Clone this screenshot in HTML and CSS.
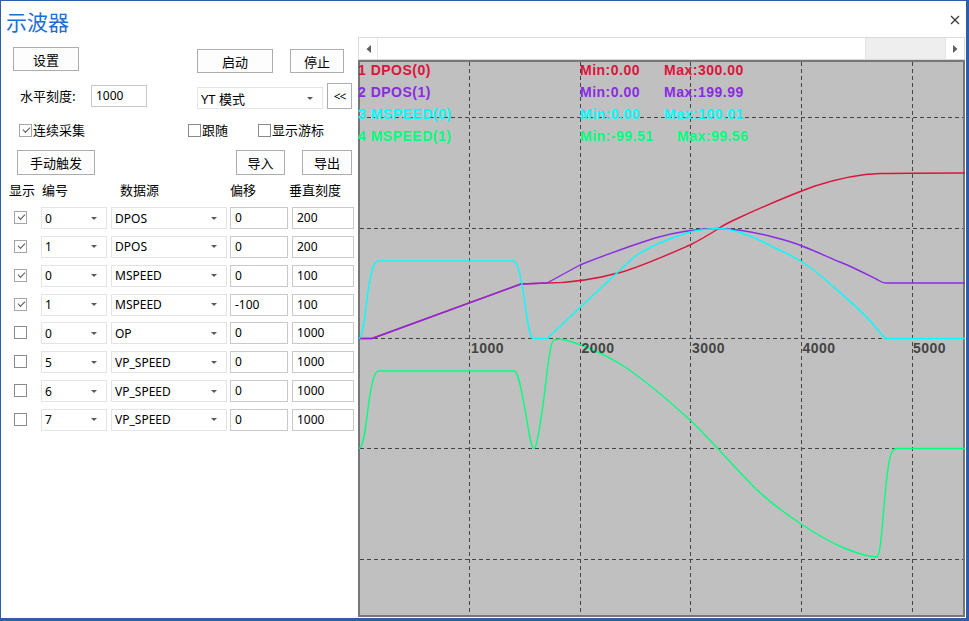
FILE: index.html
```html
<!DOCTYPE html>
<html lang="zh-CN">
<head>
<meta charset="utf-8">
<title>示波器</title>
<link rel="stylesheet" href="styles.css">
</head>
<body>
<div class="window">
  <header class="titlebar">
    <h1 class="title">示波器</h1>
    <span class="close"><svg width="10" height="10" viewBox="0 0 10 10"><path d="M1 1L9 9M9 1L1 9" stroke="#3a3a3a" stroke-width="1.3" fill="none"/></svg></span>
  </header>
  <div class="main">
    <section class="left">
      <div class="row row-a">
        <span class="btn btn-set">设置</span>
        <span class="btn btn-start">启动</span>
        <span class="btn btn-stop">停止</span>
      </div>
      <div class="row row-b">
        <span class="label">水平刻度:</span>
        <span class="field in-hscale">1000</span>
        <span class="combo sel-mode"><span class="ctext">YT 模式</span><span class="caret"></span></span>
        <span class="btn btn-collapse">&lt;&lt;</span>
      </div>
      <div class="row row-c">
        <span class="chk chk-cont"><span class="cb on"></span>连续采集</span>
        <span class="chk chk-follow"><span class="cb"></span>跟随</span>
        <span class="chk chk-cursor"><span class="cb"></span>显示游标</span>
      </div>
      <div class="row row-d">
        <span class="btn btn-trig">手动触发</span>
        <span class="btn btn-imp">导入</span>
        <span class="btn btn-exp">导出</span>
      </div>
      <div class="row thead">
        <span class="th th-show">显示</span>
        <span class="th th-no">编号</span>
        <span class="th th-src">数据源</span>
        <span class="th th-off">偏移</span>
        <span class="th th-scale">垂直刻度</span>
      </div>
      <div class="table">
        <div class="trow"><span class="cb on"></span><span class="combo c-no"><span class="ctext">0</span><span class="caret"></span></span><span class="combo c-src"><span class="ctext">DPOS</span><span class="caret"></span></span><span class="field f-off">0</span><span class="field f-scale">200</span></div>
        <div class="trow"><span class="cb on"></span><span class="combo c-no"><span class="ctext">1</span><span class="caret"></span></span><span class="combo c-src"><span class="ctext">DPOS</span><span class="caret"></span></span><span class="field f-off">0</span><span class="field f-scale">200</span></div>
        <div class="trow"><span class="cb on"></span><span class="combo c-no"><span class="ctext">0</span><span class="caret"></span></span><span class="combo c-src"><span class="ctext">MSPEED</span><span class="caret"></span></span><span class="field f-off">0</span><span class="field f-scale">100</span></div>
        <div class="trow"><span class="cb on"></span><span class="combo c-no"><span class="ctext">1</span><span class="caret"></span></span><span class="combo c-src"><span class="ctext">MSPEED</span><span class="caret"></span></span><span class="field f-off">-100</span><span class="field f-scale">100</span></div>
        <div class="trow"><span class="cb"></span><span class="combo c-no"><span class="ctext">0</span><span class="caret"></span></span><span class="combo c-src"><span class="ctext">OP</span><span class="caret"></span></span><span class="field f-off">0</span><span class="field f-scale">1000</span></div>
        <div class="trow"><span class="cb"></span><span class="combo c-no"><span class="ctext">5</span><span class="caret"></span></span><span class="combo c-src"><span class="ctext">VP_SPEED</span><span class="caret"></span></span><span class="field f-off">0</span><span class="field f-scale">1000</span></div>
        <div class="trow"><span class="cb"></span><span class="combo c-no"><span class="ctext">6</span><span class="caret"></span></span><span class="combo c-src"><span class="ctext">VP_SPEED</span><span class="caret"></span></span><span class="field f-off">0</span><span class="field f-scale">1000</span></div>
        <div class="trow"><span class="cb"></span><span class="combo c-no"><span class="ctext">7</span><span class="caret"></span></span><span class="combo c-src"><span class="ctext">VP_SPEED</span><span class="caret"></span></span><span class="field f-off">0</span><span class="field f-scale">1000</span></div>
      </div>
    </section>
    <section class="right">
      <div class="hscroll">
        <span class="sb-btn sb-left"><svg width="5" height="8" viewBox="0 0 5 8"><path d="M5 0V8L0.5 4Z" fill="#5f5f5f"/></svg></span>
        <span class="sb-thumb"></span>
        <span class="sb-track"></span>
        <span class="sb-btn sb-right"><svg width="5" height="8" viewBox="0 0 5 8"><path d="M0 0V8L4.5 4Z" fill="#5f5f5f"/></svg></span>
      </div>
      <svg class="plot" width="607" height="557" viewBox="358 60 607 557">
        <rect x="358" y="60" width="607" height="557" fill="#c0c0c0"/>
        <g stroke="#454545" stroke-width="1" stroke-dasharray="4 3" fill="none">
          <path d="M469.5 62V615M580.5 62V615M690.5 62V615M801.5 62V615M912.5 62V615"/>
          <path d="M360 117.5H963M360 228.5H963M360 338.5H963M360 448.5H963M360 559.5H963"/>
        </g>
        <rect x="359" y="61" width="605" height="555" fill="none" stroke="#767676" stroke-width="2"/>
        <g fill="none" stroke-width="1.4" stroke-linejoin="round">
          <path stroke="#dc143c" d="M359 338.5L372 338.5L521 284L547 283C575 283 600 278 622 272C645 265 665 256 690 245C700 240 710 234 718 229C722 226 726 224 732 221C760 208 790 195 815 186C840 178 860 174 880 173.5C900 173 930 173 965 173"/>
          <path stroke="#8a2be2" d="M359 338.5L372 338.5L521 284L547 283L580 265C600 257 630 246 655 238C672 233 695 229 718 228.5C740 229 758 233 773 237C785 240 795 243 802 246C815 251 828 257 840 262C855 268 868 275 878 280C881 282 883 283 886 283L965 283"/>
          <path stroke="#00ffff" d="M359 338.5C364 338.5 366 300 369 285C372 268 374 261 379 261L513 261C518 261 520 275 523 290C526 310 529 338.5 533 338.5L547 338.5L634 257C650 246 670 238 690 232C700 229.5 710 228.5 722 228.5C740 230 760 240 773 247C785 253 795 257 802 262C812 268 820 275 828 282C845 297 860 309 872 323L885 338.5L965 338.5"/>
          <path stroke="#00ff7f" d="M359 448.5C365 448.5 367 410 370 395C373 378 375 371 379 371L514 371C519 371 522 395 526 415C529 432 531 448.5 534 448.5C537 448.5 540 425 543 405C546 385 549 345 553 341C555 339 557 339 560 339C580 343 600 352 622 365C645 380 668 400 690 420C712 441 733 466 753 486C770 503 786 514 801 524C816 534 830 542 844 548C856 553 866 556 876 557C879 557 880 550 882 530C884 505 886 480 889 462C891 452 893 448.5 897 448.5L965 448.5"/>
        </g>
        <g class="lg">
          <text x="358" y="75" fill="#dc143c">1 DPOS(0)</text>
          <text x="580" y="75" fill="#dc143c">Min:0.00</text>
          <text x="664" y="75" fill="#dc143c">Max:300.00</text>
          <text x="358" y="97" fill="#8a2be2">2 DPOS(1)</text>
          <text x="580" y="97" fill="#8a2be2">Min:0.00</text>
          <text x="664" y="97" fill="#8a2be2">Max:199.99</text>
          <text x="358" y="119" fill="#00ffff">3 MSPEED(0)</text>
          <text x="580" y="119" fill="#00ffff">Min:0.00</text>
          <text x="664" y="119" fill="#00ffff">Max:100.01</text>
          <text x="358" y="141" fill="#00ff7f">4 MSPEED(1)</text>
          <text x="580" y="141" fill="#00ff7f">Min:-99.51</text>
          <text x="677" y="141" fill="#00ff7f">Max:99.56</text>
        </g>
        <g class="lg axis" fill="#444">
          <text x="471" y="353">1000</text>
          <text x="581.5" y="353">2000</text>
          <text x="692" y="353">3000</text>
          <text x="802.5" y="353">4000</text>
          <text x="913" y="353">5000</text>
        </g>
      </svg>
    </section>
  </div>
</div>
</body>
</html>
```

FILE: styles.css
```css
* { box-sizing: border-box; }
html, body { margin: 0; padding: 0; background: #fff; }
body {
  font-family: "Noto Sans", "Noto Sans CJK SC", sans-serif;
  font-size: 13px;
  color: #000;
}
.window {
  width: 969px;
  height: 621px;
  border-style: solid;
  border-color: #2d5ea8;
  border-width: 1px 3px 3px 1px;
  background: #fff;
  overflow: hidden;
  display: flex;
  flex-direction: column;
}
.titlebar {
  height: 36px;
  flex: none;
  display: flex;
  align-items: center;
  justify-content: space-between;
  padding: 4px 6px 0 5px;
}
.title {
  margin: 0;
  font-family: "Noto Sans CJK SC", sans-serif;
  font-weight: normal;
  font-size: 21px;
  line-height: 28px;
  color: #1c6fd6;
}
.close { display: flex; width: 10px; height: 10px; margin-top: -2px; margin-right: 0; }
.main { flex: 1; display: flex; min-height: 0; }
.left { width: 357px; flex: none; }
.right { width: 607px; flex: none; display: flex; flex-direction: column; }

.row { display: flex; align-items: flex-start; }

.btn {
  display: flex;
  align-items: center;
  justify-content: center;
  font-family: "Noto Sans CJK SC", sans-serif;
  font-size: 13px;
  background: #fdfdfd;
  border: 1px solid #adadad;
  color: #000;
  flex: none;
}
.row-a { margin-top: 10px; height: 26px; }
.btn-set { margin-left: 12px; width: 66px; height: 24px; }
.btn-start { margin-left: 118px; margin-top: 2px; width: 76px; height: 24px; }
.btn-stop { margin-left: 17px; margin-top: 2px; width: 54px; height: 24px; }

.row-b { margin-top: 10px; height: 26px; }
.label { margin-left: 19px; width: 71px; line-height: 26px; font-family: "Noto Sans CJK SC", sans-serif; }
.field {
  display: block;
  height: 22px;
  border: 1px solid #c9c9c9;
  background: #fff;
  font-family: "Noto Sans", sans-serif;
  font-size: 12px;
  line-height: 20px;
  padding-left: 4px;
  flex: none;
}
.in-hscale { width: 56px; margin-top: 2px; }
.combo {
  display: flex;
  align-items: center;
  justify-content: space-between;
  height: 22px;
  border: 1px solid #e4e4e4;
  background: #fff;
  padding: 0 9px 0 3px;
  font-family: "Noto Sans", sans-serif;
  font-size: 12px;
  flex: none;
}
.caret {
  width: 0; height: 0;
  border-left: 3px solid transparent;
  border-right: 3px solid transparent;
  border-top: 3px solid #5a5a5a;
}
.sel-mode { margin-left: 50px; margin-top: 4px; width: 126px; font-size: 13px; }
.sel-mode .ctext { font-family: "Noto Sans", "Noto Sans CJK SC", sans-serif; }
.btn-collapse { margin-left: 4px; width: 25px; height: 26px; font-family: "Noto Sans", sans-serif; font-size: 12px; letter-spacing: -1px; }

.row-c { margin-top: 13px; height: 16px; align-items: center; }
.chk { display: flex; align-items: center; font-family: "Noto Sans CJK SC", sans-serif; line-height: 16px; }
.chk .cb { margin-right: 1px; }
.chk-cont { margin-left: 18px; }
.chk-follow { margin-left: 103px; }
.chk-cursor { margin-left: 30px; }

.cb {
  display: block;
  position: relative;
  width: 13px;
  height: 13px;
  border: 1px solid #8a8a8a;
  background: #fff;
  flex: none;
}
.cb.on { border-color: #a6a6a6; }
.cb.on::after {
  content: "";
  position: absolute;
  left: 2.5px;
  top: 2px;
  width: 6px;
  height: 3px;
  border-left: 1.3px solid #555;
  border-bottom: 1.3px solid #555;
  transform: rotate(-45deg);
}

.row-d { margin-top: 12px; height: 25px; }
.btn-trig { margin-left: 16px; width: 78px; height: 25px; }
.btn-imp { margin-left: 141px; width: 49px; height: 25px; }
.btn-exp { margin-left: 17px; width: 50px; height: 25px; }

.thead { margin-top: 6px; height: 18px; line-height: 18px; font-family: "Noto Sans CJK SC", sans-serif; }
.th { display: block; flex: none; }
.th-show { margin-left: 8px; width: 33px; }
.th-no { width: 78px; }
.th-src { width: 110px; }
.th-off { width: 59px; }

.table { margin-top: 8px; }
.trow { display: flex; align-items: flex-start; height: 28.85px; }
.trow .cb { margin-left: 13px; margin-top: 4px; }
.c-no { margin-left: 14px; width: 66px; }
.c-src { margin-left: 4px; width: 116px; }
.f-off { margin-left: 3px; width: 58px; }
.f-scale { margin-left: 4px; width: 62px; }

.hscroll {
  display: flex;
  height: 23px;
  border: 1px solid #dadada;
  background: #fff;
  flex: none;
}
.sb-btn { display: flex; align-items: center; justify-content: center; width: 19px; flex: none; background: #fff; }
.sb-left { border-right: 1px solid #e6e6e6; }
.sb-thumb { width: 488px; flex: none; background: #fff; border-right: 1px solid #e2e2e2; }
.sb-track { flex: 1; background: #eeeeee; }
.sb-right { border-left: 1px solid #e6e6e6; }

.plot { display: block; flex: none; }
.lg text {
  font-family: "Liberation Sans", Arial, sans-serif;
  font-weight: bold;
  font-size: 14px;
  letter-spacing: 0.5px;
}
```
